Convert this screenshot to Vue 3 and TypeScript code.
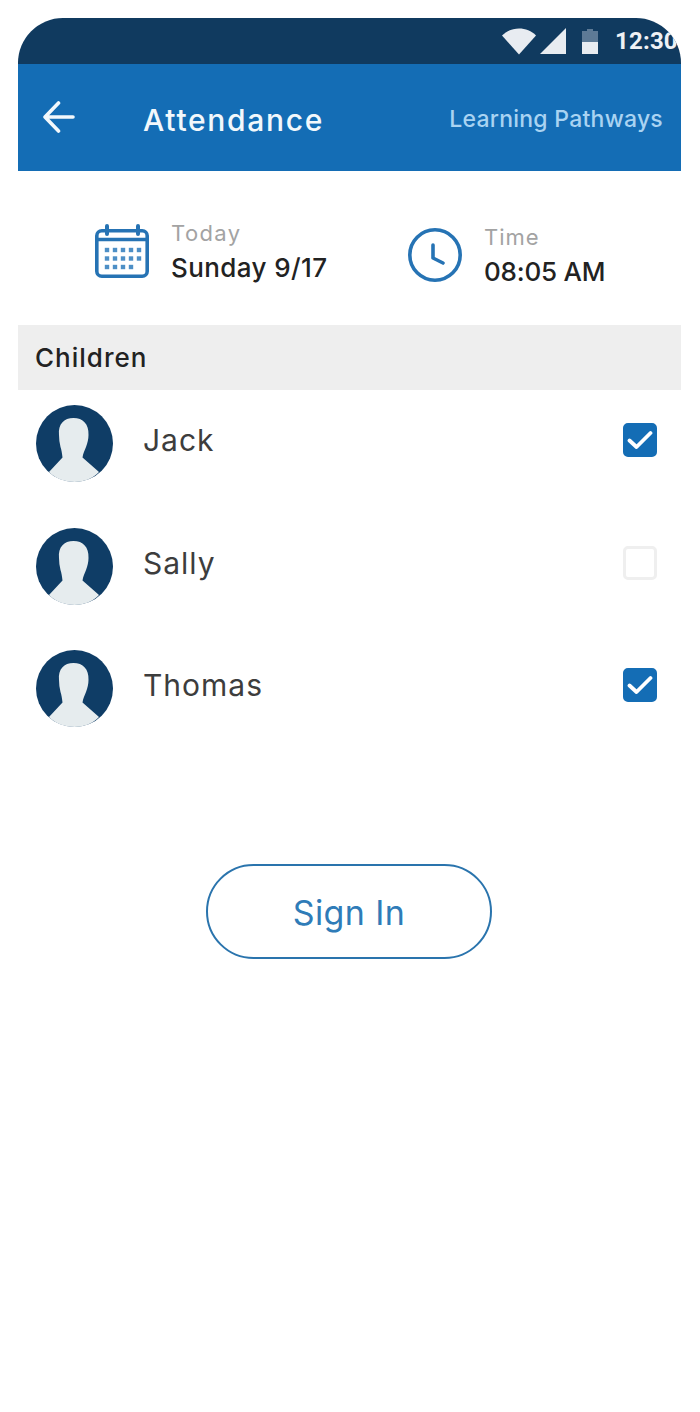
<script setup lang="ts">
interface Child { name: string; checked: boolean }
const children: Child[] = [
  { name: 'Jack', checked: true },
  { name: 'Sally', checked: false },
  { name: 'Thomas', checked: true },
]
const dots: [number, number][] = []
for (let r = 0; r < 3; r++) {
  for (let c = 0; c < (r === 2 ? 4 : 5); c++) dots.push([12 + c * 8, 26 + r * 8.5])
}
</script>

<template>
  <main class="page">
    <section class="screen">
      <div class="status">
        <svg class="wifi" width="34" height="27" viewBox="0 0 34 27"><path d="M0 7.500C4.500 2.800 10.500 0.500 17 0.500S29.500 2.800 34 7.500L17 26.500Z" fill="#e8ecf1"/></svg>
        <svg class="signal" width="27" height="26" viewBox="0 0 27 26"><path d="M0 26L26 0V26Z" fill="#e8ecf1"/></svg>
        <svg class="battery" width="16" height="25" viewBox="0 0 16 25"><path d="M5 0H11V2H16V13H0V2H5Z" fill="#5d7a96"/><path d="M0 13H16V25H0Z" fill="#e8ecf1"/></svg>
        <span class="clock">12:30</span>
      </div>
      <header class="appbar">
        <svg class="back" width="32" height="32" viewBox="0 0 32 32" fill="none" stroke="#f2f8fc" stroke-width="3.600" stroke-linecap="round" stroke-linejoin="round"><path d="M30 16H2.500M15.500 2L2 16L15.500 30"/></svg>
        <h1 class="title">Attendance</h1>
        <span class="link">Learning Pathways</span>
      </header>
      <div class="info">
        <div class="info-item today">
          <svg width="54" height="54" viewBox="0 0 54 54" fill="none">
            <rect x="1.800" y="6.800" width="50.400" height="45.400" rx="5" stroke="#2673b4" stroke-width="3.600"/>
            <path d="M2 15.500H52" stroke="#2673b4" stroke-width="3.600"/>
            <path d="M12 2V10M43 2V10" stroke="#2673b4" stroke-width="4" stroke-linecap="round"/>
            <rect v-for="d in dots" :key="d[0] + '-' + d[1]" :x="d[0] - 2.200" :y="d[1] - 2.200" width="4.400" height="4.400" fill="#4d8fc6"/>
          </svg>
          <div class="info-text">
            <span class="label today-label">Today</span>
            <span class="value">Sunday 9/17</span>
          </div>
        </div>
        <div class="info-item time">
          <svg width="54" height="54" viewBox="0 0 54 54" fill="none" stroke="#2673b4">
            <circle cx="27" cy="27" r="25.200" stroke-width="3.600"/>
            <path d="M25 17V30L35 35" stroke-width="3.600" stroke-linecap="round" stroke-linejoin="round"/>
          </svg>
          <div class="info-text">
            <span class="label time-label">Time</span>
            <span class="value clock-value">08:05 AM</span>
          </div>
        </div>
      </div>
      <div class="section-head">Children</div>
      <ul class="list">
        <li v-for="child in children" :key="child.name" class="row">
          <svg class="avatar" width="77" height="77" viewBox="0 0 77 77">
            <circle cx="38.500" cy="38.500" r="38.500" fill="#0f3d66"/>
            <path d="M13 67L26.500 52.500C26 48 25.500 45 24.500 42C23.500 38 23 34 23 30C22 19 28 13 37.500 13C47 13 53 19 52.500 30C52.500 34 51.500 38 50 42C49 45 47 48 46.500 52.500L63 67C57 73.500 48 77 38.500 77C29 77 19 73.500 13 67Z" fill="#e6ecee"/>
          </svg>
          <span class="name">{{ child.name }}</span>
          <span class="check" :class="{ on: child.checked }">
            <svg v-if="child.checked" width="26" height="20" viewBox="0 0 26 20" fill="none" stroke="#fff" stroke-width="3.800" stroke-linecap="round" stroke-linejoin="round"><path d="M2.500 10.500L9.500 17L23.500 3"/></svg>
          </span>
        </li>
      </ul>
      <div class="action"><button class="signin" type="button">Sign In</button></div>
    </section>
  </main>
</template>

<style scoped>
.page {
  width: 700px;
  height: 1412px;
  box-sizing: border-box;
  padding: 18px 19px 0 18px;
  background: #fff;
  font-family: Inter, "Liberation Sans", sans-serif;
  overflow: hidden;
}
.screen { border-radius: 45px 45px 0 0; overflow: hidden; }
.status {
  height: 46px;
  background: #103a5f;
  display: flex;
  align-items: center;
  padding-left: 484px;
  white-space: nowrap;
}
.wifi { flex: none; }
.signal { flex: none; margin-left: 4px; margin-top: -1px; }
.battery { flex: none; margin-left: 15px; margin-top: 1px; }
.clock {
  flex: none;
  margin-left: 17px;
  color: #eef1f5;
  font: 700 24px Roboto, sans-serif;
  letter-spacing: 0.2px;
}
.appbar {
  height: 107px;
  background: #146db5;
  display: flex;
  align-items: center;
  padding: 0 18px 0 25px;
}
.back { flex: none; margin-top: -1px; }
.title {
  margin: 4px 0 0 68px;
  color: #f2f8fc;
  font-size: 30px;
  font-weight: 500;
  letter-spacing: 1.700px;
}
.link {
  margin: 2px 0 0 auto;
  color: #a9d3f2;
  font-size: 23px;
  font-weight: 500;
  letter-spacing: 0.250px;
}
.info {
  height: 154px;
  display: flex;
  box-sizing: border-box;
  padding-left: 77px;
}
.info-item { display: flex; align-items: center; gap: 22px; }
.today { width: 313px; padding-top: 6px; box-sizing: border-box; }
.time { padding-top: 14px; }
.info-text { display: flex; flex-direction: column; gap: 6px; }
.label { color: #a3a3a3; font-size: 22px; }
.today-label { letter-spacing: 1.400px; }
.time-label { letter-spacing: 1px; }
.value { color: #222; font-size: 26px; font-weight: 500; letter-spacing: 0.400px; }
.clock-value { letter-spacing: -0.200px; }
.section-head {
  height: 65px;
  background: #eeeeee;
  display: flex;
  align-items: center;
  padding-left: 17px;
  color: #222;
  font-size: 26px;
  font-weight: 500;
  letter-spacing: 1px;
}
.list { list-style: none; margin: 0; padding: 15px 24px 0 18px; }
.row { height: 122.500px; display: flex; align-items: flex-start; }
.avatar { flex: none; }
.name { margin-left: 30px; margin-top: 17px; color: #3d3d3d; font-size: 30px; letter-spacing: 1px; }
.check {
  flex: none;
  width: 34px;
  height: 34px;
  box-sizing: border-box;
  margin-left: auto;
  margin-top: 18px;
  border: 3px solid #efefef;
  border-radius: 5px;
  display: flex;
  align-items: center;
  justify-content: center;
}
.check.on { background: #146db5; border-color: #146db5; }
.action { display: flex; justify-content: center; padding: 91px 1px 0 0; }
.signin {
  width: 286px;
  height: 95px;
  padding-top: 4px;
  border: 2px solid #2a74ad;
  border-radius: 48px;
  background: #fff;
  color: #2f7cb8;
  font: 400 34px Inter, "Liberation Sans", sans-serif;
  letter-spacing: 0.400px;
}
</style>
